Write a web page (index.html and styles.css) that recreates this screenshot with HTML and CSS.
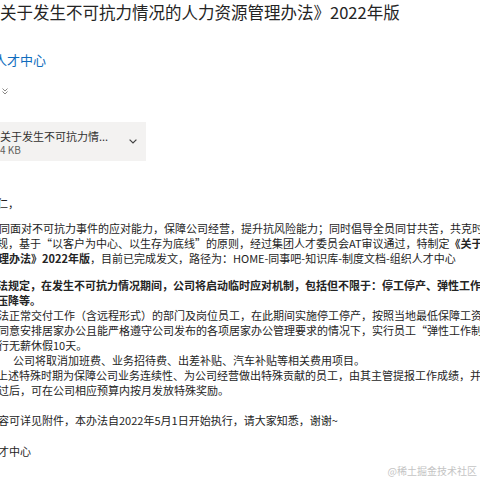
FILE: index.html
```html
<!DOCTYPE html>
<html lang="zh-CN">
<head>
<meta charset="utf-8">
<title>邮件</title>
<link rel="stylesheet" href="styles.css">
</head>
<body>
<div class="page">
  <header class="head">
    <h1 class="title">关于发生不可抗力情况的人力资源管理办法》2022年版</h1>
    <div class="sender">人才中心</div>
    <div class="expand">
      <svg width="6" height="7" viewBox="0 0 6 7"><polyline points="0.5,0.5 3,3 5.5,0.5" fill="none" stroke="#8a8886" stroke-width="1"/><polyline points="0.5,3.5 3,6 5.5,3.5" fill="none" stroke="#8a8886" stroke-width="1"/></svg>
    </div>
    <div class="card">
      <div class="card-text">
        <div class="card-name">关于发生不可抗力情...</div>
        <div class="card-size">4 KB</div>
      </div>
      <svg class="card-chev" width="8" height="5" viewBox="0 0 8 5"><polyline points="0.6,0.6 4,4 7.4,0.6" fill="none" stroke="#424242" stroke-width="1.2"/></svg>
    </div>
  </header>

  <main class="body">
    <div class="para p-greet"><div class="ln ln-greet">仁，</div></div>

    <div class="para p-one">
      <div class="ln ln-a">同面对不可抗力事件的应对能力，保障公司经营，提升抗风险能力；同时倡导全员同甘共苦，共克时艰，</div>
      <div class="ln ln-b">规，基于“以客户为中心、以生存为底线”的原则，经过集团人才委员会AT审议通过，特制定<b>《关于发生</b></div>
      <div class="ln ln-c"><b>理办法》2022年版</b>，目前已完成发文，路径为：HOME-同事吧-知识库-制度文档-组织人才中心</div>
    </div>

    <div class="para p-two">
      <div class="ln ln-b"><b>法规定，在发生不可抗力情况期间，公司将启动临时应对机制，包括但不限于：停工停产、弹性工作制、</b></div>
      <div class="ln ln-b"><b>压降等。</b></div>
      <div class="ln ln-c">法正常交付工作（含远程形式）的部门及岗位员工，在此期间实施停工停产，按照当地最低保障工资发放；</div>
      <div class="ln ln-c">同意安排居家办公且能严格遵守公司发布的各项居家办公管理要求的情况下，实行员工“弹性工作制”，</div>
      <div class="ln ln-c">行无薪休假10天。</div>
      <div class="ln ln-indent">公司将取消加班费、业务招待费、出差补贴、汽车补贴等相关费用项目。</div>
      <div class="ln ln-b">上述特殊时期为保障公司业务连续性、为公司经营做出特殊贡献的员工，由其主管提报工作成绩，并经审核</div>
      <div class="ln ln-c">过后，可在公司相应预算内按月发放特殊奖励。</div>
    </div>

    <div class="para p-three"><div class="ln ln-c">容可详见附件，本办法自2022年5月1日开始执行，请大家知悉，谢谢~</div></div>

    <div class="para p-four"><div class="ln ln-c">才中心</div></div>
  </main>

  <div class="watermark">@稀土掘金技术社区</div>
</div>
</body>
</html>
```

FILE: styles.css
```css
html, body {
  margin: 0;
  padding: 0;
  background: #ffffff;
}

.page {
  position: relative;
  width: 480px;
  height: 480px;
  overflow: hidden;
  font-family: "Noto Sans CJK SC", "Noto Sans", sans-serif;
  color: #242424;
}

.title {
  margin: 0;
  font-size: 16.5px;
  font-weight: 400;
  line-height: 25px;
  white-space: nowrap;
  color: #242424;
}

.sender {
  margin-top: 26px;
  margin-left: -6px;
  font-size: 13px;
  line-height: 18px;
  color: #0f6cbd;
}

.expand {
  margin-top: 19px;
  padding-left: 2px;
  height: 7px;
  display: flex;
}

.card {
  margin-top: 27px;
  width: 146px;
  height: 39px;
  background: #f3f2f1;
  display: flex;
  align-items: center;
  justify-content: space-between;
  padding-right: 9px;
  box-sizing: border-box;
}

.card-text {
  display: flex;
  flex-direction: column;
  padding-top: 1px;
}

.card-name {
  font-size: 11px;
  line-height: 14px;
  color: #323130;
  white-space: nowrap;
}

.card-size {
  font-size: 10px;
  line-height: 13px;
  color: #605e5c;
}

.card-chev {
  margin-top: 0px;
}

.body {
  font-size: 11px;
  line-height: 15px;
}

.para {
  white-space: nowrap;
}

.p-greet { margin-top: 35px; }
.p-one { margin-top: 10px; }
.p-two { margin-top: 12px; }
.p-three { margin-top: 15px; }
.p-four { margin-top: 16px; }

.ln b { font-weight: 700; }

.ln-greet { margin-left: -3px; }
.ln-a { margin-left: -1px; }
.ln-b { margin-left: -3px; }
.ln-c { margin-left: -2px; }
.ln-indent { padding-left: 13px; }

.watermark {
  position: absolute;
  right: 3px;
  bottom: 2px;
  font-size: 10px;
  line-height: 14px;
  color: #c4c4c4;
  white-space: nowrap;
}
```
